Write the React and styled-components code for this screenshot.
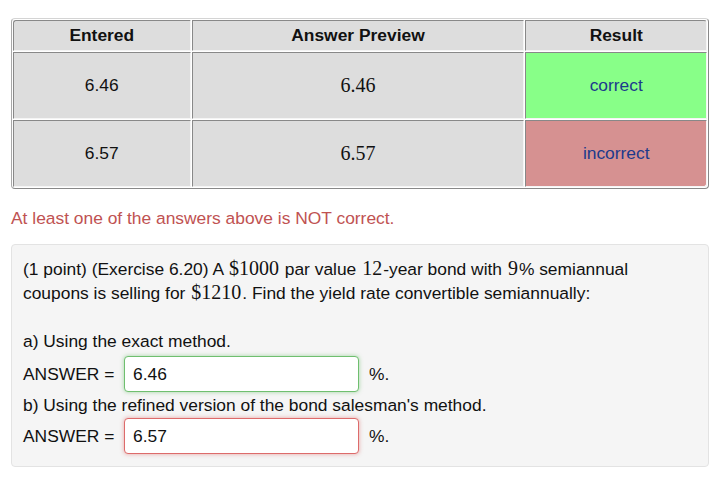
import React from 'react'
import styled, { createGlobalStyle } from 'styled-components';

const GlobalStyle = createGlobalStyle`
  body {
    margin: 0;
    background: #fff;
    font-family: "Liberation Sans", Arial, sans-serif;
    font-size: 17.4px;
    color: #111;
  }
`;

const Page = styled.div`
  padding: 18px 12px 0 11px;
`;

const Results = styled.table`
  width: 698px;
  border-collapse: separate;
  border-spacing: 1px;
  border-style: solid;
  border-width: 1px;
  border-color: #d4d4d4 #888 #888 #a8a8a8;
  border-radius: 4px;
  background: #fff;
`;

const HeadCell = styled.th`
  height: 29px;
  padding: 0;
  background: #dddddd;
  font-weight: bold;
  font-size: 17.4px;
  text-align: center;
  border-style: solid;
  border-width: 1px;
  border-color: #888 #f4f4f4 #f4f4f4 #888;
  ${props => props.first && 'border-top-left-radius: 3px;'}
  ${props => props.last && 'border-top-right-radius: 3px;'}
`;

const Cell = styled.td`
  height: 65px;
  padding: 0;
  text-align: center;
  border-style: solid;
  border-width: 1px;
  border-color: #888 #f4f4f4 #f4f4f4 #888;
  background: ${props =>
    props.status === 'correct' ? '#88ff88' :
    props.status === 'incorrect' ? '#d69191' : '#dddddd'};
  color: ${props => props.status ? '#1c3a8c' : '#111'};
  font-size: ${props => props.math ? '20px' : '17.4px'};
  font-family: ${props => props.math
    ? '"Liberation Serif", "Times New Roman", serif'
    : '"Liberation Sans", Arial, sans-serif'};
  ${props => props.corner && 'border-bottom-right-radius: 3px;'}
`;

const Warning = styled.div`
  margin-top: 19px;
  color: #c05252;
  font-size: 17.4px;
  line-height: 20px;
`;

const Problem = styled.div`
  margin-top: 16px;
  width: 674px;
  padding: 12px 11px 12px 11px;
  background: #f5f5f5;
  border: 1px solid #e3e3e3;
  border-radius: 4px;
  line-height: 24px;
  font-size: 17.4px;
`;

const Math = styled.span`
  font-family: "Liberation Serif", "Times New Roman", serif;
  font-size: 20px;
  line-height: 0;
  margin: 0 1px;
`;

const Gap = styled.div`
  height: 24px;
`;

const AnswerRow = styled.div`
  display: flex;
  align-items: center;
  height: 36px;
  margin: ${props => props.first ? '3px 0 1px' : '1px 0 0'};
`;

const AnswerLabel = styled.span`
  width: 101px;
`;

const AnswerInput = styled.input`
  box-sizing: border-box;
  width: 235px;
  height: 36px;
  padding: 0 8px;
  font-family: "Liberation Sans", Arial, sans-serif;
  font-size: 17.4px;
  color: #111;
  background: #fff;
  border-radius: 4px;
  border: 1px solid ${props => props.ok ? '#6fbf6f' : '#dd6b6b'};
  box-shadow: 0 0 4px ${props => props.ok ? 'rgba(92,184,92,0.55)' : 'rgba(217,83,79,0.5)'};
  outline: none;
`;

const Unit = styled.span`
  margin-left: 10px;
`;

const rows = [
  { entered: '6.46', status: 'correct' },
  { entered: '6.57', status: 'incorrect' },
];

export default function App() {
  return (
    <Page>
      <GlobalStyle />
      <Results>
        <colgroup>
          <col style={{ width: 177 }} />
          <col style={{ width: 332 }} />
          <col style={{ width: 181 }} />
        </colgroup>
        <thead>
          <tr>
            <HeadCell first>Entered</HeadCell>
            <HeadCell>Answer Preview</HeadCell>
            <HeadCell last>Result</HeadCell>
          </tr>
        </thead>
        <tbody>
          {rows.map((r, i) => (
            <tr key={r.entered}>
              <Cell>{r.entered}</Cell>
              <Cell math>{r.entered}</Cell>
              <Cell status={r.status} corner={i === rows.length - 1}>{r.status}</Cell>
            </tr>
          ))}
        </tbody>
      </Results>

      <Warning>At least one of the answers above is NOT correct.</Warning>

      <Problem>
        (1 point) (Exercise 6.20) A <Math>$1000</Math> par value <Math>12</Math>-year bond with <Math>9</Math>% semiannual
        <br />
        coupons is selling for <Math>$1210</Math>. Find the yield rate convertible semiannually:
        <Gap />
        a) Using the exact method.
        <AnswerRow first>
          <AnswerLabel>ANSWER =</AnswerLabel>
          <AnswerInput ok defaultValue="6.46" />
          <Unit>%.</Unit>
        </AnswerRow>
        b) Using the refined version of the bond salesman's method.
        <AnswerRow>
          <AnswerLabel>ANSWER =</AnswerLabel>
          <AnswerInput defaultValue="6.57" />
          <Unit>%.</Unit>
        </AnswerRow>
      </Problem>
    </Page>
  );
}
